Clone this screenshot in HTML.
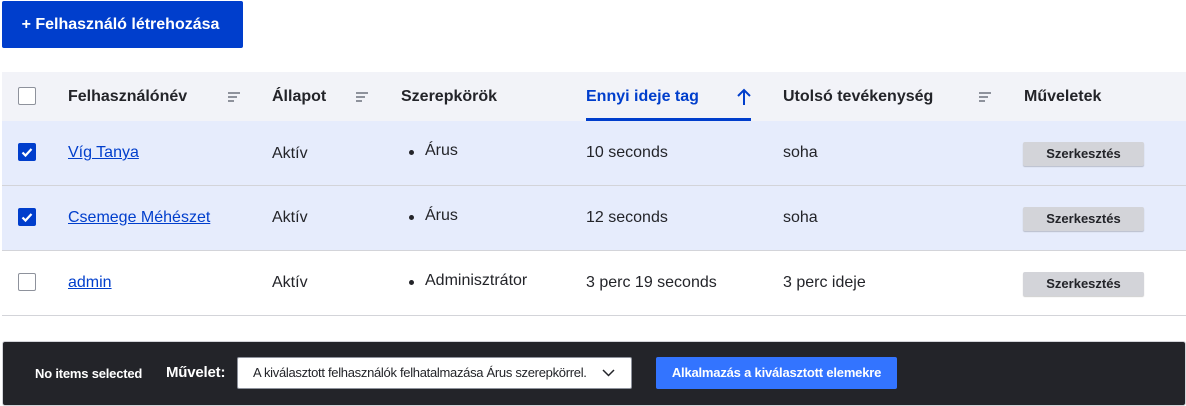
<!DOCTYPE html>
<html><head><meta charset="utf-8"><style>
*{margin:0;padding:0;box-sizing:border-box}
body{width:1186px;height:406px;background:#fff;font-family:"Liberation Sans",sans-serif;color:#232429;position:relative;overflow:hidden}
.a{position:absolute}
.btn{left:2px;top:1px;width:241px;height:47px;background:#003ecc;color:#fff;font-weight:bold;font-size:16px;line-height:47px;text-align:center;border-radius:2px;padding-right:4px}
.hdr{left:2px;top:72px;width:1184px;height:49px;background:#f2f3f8}
.row{left:2px;width:1184px;height:65px;border-bottom:1px solid #d3d4d9}
.sel{background:#e6ecfc}
.th{font-weight:bold;font-size:16px;top:88px}
.td{font-size:16px}
.cb{width:18px;height:18px;border:1px solid #8e929c;border-radius:2px;background:#fff;left:18px}
.cbc{background:#003ecc;border-color:#003ecc}
a{color:#003ecc;text-decoration:underline}
.ed{left:1023px;width:121px;height:24px;background:#d3d4d9;border-radius:2px;font-size:13px;font-weight:bold;text-align:center;line-height:24px;box-shadow:0 1px 1px rgba(0,0,0,.2)}
.bul{width:5px;height:5px;border-radius:50%;background:#232429;left:409px}
.sort{left:0;width:12px}
.sort i{display:block;height:2px;background:#8e929c;margin-bottom:2px}
</style></head><body>
<div class="a btn">+ Felhasználó létrehozása</div>
<div class="a hdr"></div>
<div class="a cb" style="top:87px"></div>
<div class="a th" style="left:68px">Felhasználónév</div>
<div class="a sort" style="left:228px;top:92px"><i style="width:12px"></i><i style="width:9px"></i><i style="width:6px"></i></div>
<div class="a th" style="left:272px">Állapot</div>
<div class="a sort" style="left:356px;top:92px"><i style="width:12px"></i><i style="width:9px"></i><i style="width:6px"></i></div>
<div class="a th" style="left:401px">Szerepkörök</div>
<div class="a th" style="left:586px;color:#003ecc">Ennyi ideje tag</div>
<svg class="a" style="left:736px;top:88px" width="16" height="18" viewBox="0 0 16 18"><path d="M8 17V3M2 8l6-6 6 6" stroke="#003ecc" stroke-width="2" fill="none"/></svg>
<div class="a" style="left:586px;top:118px;width:165px;height:3px;background:#003ecc"></div>
<div class="a th" style="left:783px">Utolsó tevékenység</div>
<div class="a sort" style="left:979px;top:92px"><i style="width:12px"></i><i style="width:9px"></i><i style="width:6px"></i></div>
<div class="a th" style="left:1024px">Műveletek</div>

<div class="a row sel" style="top:121px"></div>
<div class="a row sel" style="top:186px"></div>
<div class="a row" style="top:251px"></div>

<div class="a cb cbc" style="top:143px"><svg width="16" height="16" viewBox="0 0 16 16"><path d="M3.5 8.5l3 3 6-6.5" stroke="#fff" stroke-width="2.2" fill="none"/></svg></div>
<div class="a td" style="left:68px;top:144px"><a>Víg Tanya</a></div>
<div class="a td" style="left:272px;top:145px">Aktív</div>
<div class="a bul" style="top:150px"></div><div class="a td" style="left:425px;top:142px">Árus</div>
<div class="a td" style="left:586px;top:144px">10 seconds</div>
<div class="a td" style="left:783px;top:144px">soha</div>
<div class="a ed" style="top:142px">Szerkesztés</div>

<div class="a cb cbc" style="top:208px"><svg width="16" height="16" viewBox="0 0 16 16"><path d="M3.5 8.5l3 3 6-6.5" stroke="#fff" stroke-width="2.2" fill="none"/></svg></div>
<div class="a td" style="left:68px;top:209px"><a>Csemege Méhészet</a></div>
<div class="a td" style="left:272px;top:209px">Aktív</div>
<div class="a bul" style="top:215px"></div><div class="a td" style="left:425px;top:207px">Árus</div>
<div class="a td" style="left:586px;top:209px">12 seconds</div>
<div class="a td" style="left:783px;top:209px">soha</div>
<div class="a ed" style="top:207px">Szerkesztés</div>

<div class="a cb" style="top:273px"></div>
<div class="a td" style="left:68px;top:274px"><a>admin</a></div>
<div class="a td" style="left:272px;top:274px">Aktív</div>
<div class="a bul" style="top:280px"></div><div class="a td" style="left:425px;top:272px">Adminisztrátor</div>
<div class="a td" style="left:586px;top:274px">3 perc 19 seconds</div>
<div class="a td" style="left:783px;top:274px">3 perc ideje</div>
<div class="a ed" style="top:272px">Szerkesztés</div>

<div class="a" style="left:2px;top:341px;width:1184px;height:65px;background:#232429;border-radius:3px;border:1px solid #d3d4d9"></div>
<div class="a" style="left:35px;top:366px;color:#fff;font-size:13px;font-weight:bold;letter-spacing:-0.2px">No items selected</div>
<div class="a" style="left:166px;top:364px;color:#fff;font-size:15px;font-weight:bold;letter-spacing:-0.2px">Művelet:</div>
<div class="a" style="left:237px;top:357px;width:395px;height:32px;background:#fff;border:1px solid #8e929c;border-radius:2px;font-size:13px;line-height:30px;padding-left:15px;color:#232429;letter-spacing:-0.3px;white-space:nowrap;overflow:hidden">A kiválasztott felhasználók felhatalmazása Árus szerepkörrel.
<svg style="position:absolute;right:16px;top:11px" width="13" height="8" viewBox="0 0 13 8"><path d="M1 1l5.5 5.5L12 1" stroke="#232429" stroke-width="1.5" fill="none"/></svg></div>
<div class="a" style="left:656px;top:357px;width:241px;height:32px;background:#3374ff;border-radius:2px;color:#fff;font-size:13px;font-weight:bold;text-align:center;line-height:32px;letter-spacing:-0.2px">Alkalmazás a kiválasztott elemekre</div>
</body></html>
